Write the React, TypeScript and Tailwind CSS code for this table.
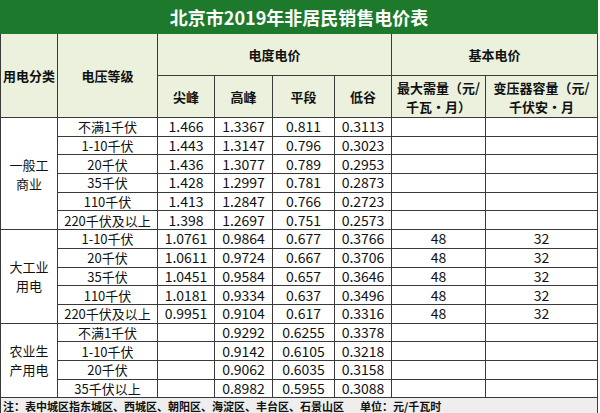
const font = { fontFamily: '"Noto Sans CJK SC", "Noto Sans", sans-serif' };

type Row = {
  volt: string;
  v: [string, string, string, string];
  demand?: string;
  capacity?: string;
};

const groups: { name: [string, string]; rows: Row[] }[] = [
  {
    name: ['一般工', '商业'],
    rows: [
      { volt: '不满1千伏', v: ['1.466', '1.3367', '0.811', '0.3113'] },
      { volt: '1-10千伏', v: ['1.443', '1.3147', '0.796', '0.3023'] },
      { volt: '20千伏', v: ['1.436', '1.3077', '0.789', '0.2953'] },
      { volt: '35千伏', v: ['1.428', '1.2997', '0.781', '0.2873'] },
      { volt: '110千伏', v: ['1.413', '1.2847', '0.766', '0.2723'] },
      { volt: '220千伏及以上', v: ['1.398', '1.2697', '0.751', '0.2573'] },
    ],
  },
  {
    name: ['大工业', '用电'],
    rows: [
      { volt: '1-10千伏', v: ['1.0761', '0.9864', '0.677', '0.3766'], demand: '48', capacity: '32' },
      { volt: '20千伏', v: ['1.0611', '0.9724', '0.667', '0.3706'], demand: '48', capacity: '32' },
      { volt: '35千伏', v: ['1.0451', '0.9584', '0.657', '0.3646'], demand: '48', capacity: '32' },
      { volt: '110千伏', v: ['1.0181', '0.9334', '0.637', '0.3496'], demand: '48', capacity: '32' },
      { volt: '220千伏及以上', v: ['0.9951', '0.9104', '0.617', '0.3316'], demand: '48', capacity: '32' },
    ],
  },
  {
    name: ['农业生', '产用电'],
    rows: [
      { volt: '不满1千伏', v: ['', '0.9292', '0.6255', '0.3378'] },
      { volt: '1-10千伏', v: ['', '0.9142', '0.6105', '0.3218'] },
      { volt: '20千伏', v: ['', '0.9062', '0.6035', '0.3158'] },
      { volt: '35千伏以上', v: ['', '0.8982', '0.5955', '0.3088'] },
    ],
  },
];

const cell = 'border border-[#3a3a3a] text-center p-0';
const head = 'border border-[#3a3a3a] text-center p-0 font-bold text-[13px] text-[#111] leading-[19px]';

export default function App() {
  return (
    <div className="w-[600px] h-[413px] bg-white overflow-hidden" style={font}>
      <table className="w-[597px] table-fixed border-collapse text-[#111]">
        <colgroup>
          <col className="w-[57px]" />
          <col className="w-[100px]" />
          <col className="w-[57px]" />
          <col className="w-[58px]" />
          <col className="w-[62px]" />
          <col className="w-[57px]" />
          <col className="w-[94px]" />
          <col className="w-[112px]" />
        </colgroup>
        <tbody>
          <tr className="h-[33px]">
            <td colSpan={8} className="border border-[#1d7a2c] bg-[#1d7a2c] text-center text-white font-bold text-[18px] p-0">
              北京市2019年非居民销售电价表
            </td>
          </tr>
          <tr className="h-[42px] bg-[#ebf1dd]">
            <td rowSpan={2} className={head}>用电分类</td>
            <td rowSpan={2} className={head}>电压等级</td>
            <td colSpan={4} className={head}>电度电价</td>
            <td colSpan={2} className={head}>基本电价</td>
          </tr>
          <tr className="h-[42px] bg-[#ebf1dd]">
            <td className={head}>尖峰</td>
            <td className={head}>高峰</td>
            <td className={head}>平段</td>
            <td className={head}>低谷</td>
            <td className={head}>
              最大需量（元/
              <br />
              千瓦•月）
            </td>
            <td className={head}>
              变压器容量（元/
              <br />
              千伏安•月
            </td>
          </tr>
          {groups.map((g) =>
            g.rows.map((r, i) => (
              <tr key={g.name[0] + i} className="h-[18.7px] text-[13px] leading-[17px]">
                {i === 0 && (
                  <td rowSpan={g.rows.length} className={`${cell} text-[13px] leading-[19px]`}>
                    {g.name[0]}
                    <br />
                    {g.name[1]}
                  </td>
                )}
                <td className={cell}>{r.volt}</td>
                {r.v.map((x, j) => (
                  <td key={j} className={`${cell} text-[14px]`}>
                    {x}
                  </td>
                ))}
                <td className={`${cell} text-[14px]`}>{r.demand ?? ''}</td>
                <td className={`${cell} text-[14px]`}>{r.capacity ?? ''}</td>
              </tr>
            ))
          )}
          <tr className="h-[17px] bg-[#eeeeee]">
            <td colSpan={8} className="border border-[#3a3a3a] p-0 pl-[2px] text-left text-[11px] font-bold leading-[15px] whitespace-nowrap">
              <span>注：表中城区指东城区、西城区、朝阳区、海淀区、丰台区、石景山区</span>
              <span className="ml-[16px]">单位：元/千瓦时</span>
            </td>
          </tr>
        </tbody>
      </table>
    </div>
  );
}
